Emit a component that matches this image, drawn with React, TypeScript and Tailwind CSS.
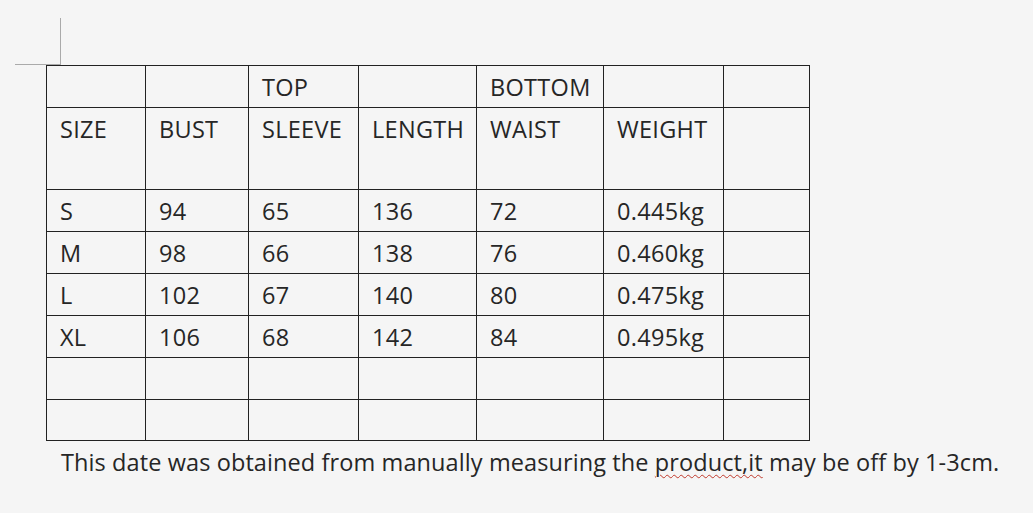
import React from "react";

const cols = [99, 103, 110, 118, 127, 120, 86];
const rows: { h: number; cells: string[] }[] = [
  { h: 42, cells: ["", "", "TOP", "", "BOTTOM", "", ""] },
  { h: 82, cells: ["SIZE", "BUST", "SLEEVE", "LENGTH", "WAIST", "WEIGHT", ""] },
  { h: 42, cells: ["S", "94", "65", "136", "72", "0.445kg", ""] },
  { h: 42, cells: ["M", "98", "66", "138", "76", "0.460kg", ""] },
  { h: 42, cells: ["L", "102", "67", "140", "80", "0.475kg", ""] },
  { h: 42, cells: ["XL", "106", "68", "142", "84", "0.495kg", ""] },
  { h: 42, cells: ["", "", "", "", "", "", ""] },
  { h: 41, cells: ["", "", "", "", "", "", ""] },
];

export default function App() {
  return (
    <div
      className="w-[1033px] h-[513px] bg-[#f5f5f5] text-[#262626] overflow-hidden relative"
      style={{ fontFamily: '"Open Sans", "Noto Sans", sans-serif' }}
    >
      <div className="absolute left-[60px] top-[18px] w-px h-[47px] bg-[#aaaaaa]" />
      <div className="absolute left-[15px] top-[64px] w-[46px] h-px bg-[#aaaaaa]" />
      <div className="pt-[65px] pl-[46px]">
        <table className="border-collapse table-fixed">
          <colgroup>
            {cols.map((w, i) => (
              <col key={i} style={{ width: w }} />
            ))}
          </colgroup>
          <tbody>
            {rows.map((r, ri) => (
              <tr key={ri} style={{ height: r.h }}>
                {r.cells.map((c, ci) => (
                  <td
                    key={ci}
                    className="border border-[#222222] align-top p-0 pl-[13px] pt-[7px] text-[23.5px] leading-[28px] tracking-[0.3px] whitespace-nowrap"
                  >
                    {c}
                  </td>
                ))}
              </tr>
            ))}
          </tbody>
        </table>
        <p className="mt-[6px] ml-[15px] text-[23.5px] leading-[30px] tracking-[0.1px] whitespace-nowrap">
          This date was obtained from manually measuring the{" "}
          <span className="underline decoration-wavy decoration-[#c0392b] decoration-1 underline-offset-[3px]">
            product,it
          </span>{" "}
          may be off by 1-3cm.
        </p>
      </div>
    </div>
  );
}
